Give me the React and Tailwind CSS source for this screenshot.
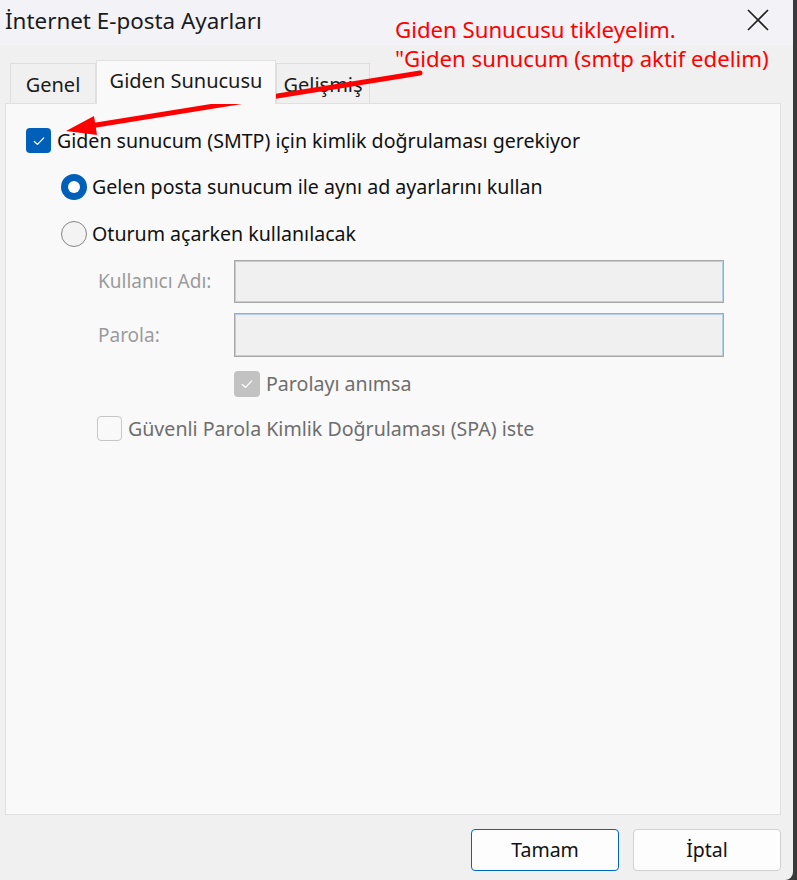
import React from "react";

const font = { fontFamily: '"Noto Sans", "Open Sans", sans-serif' };

function CheckMark({ color = "#ffffff" }) {
  return (
    <svg width="14" height="14" viewBox="0 0 14 14" fill="none">
      <path d="M2.3 7.4 L5.6 10.4 L11.7 3.9" stroke={color} strokeWidth="1.3" strokeLinecap="round" strokeLinejoin="round" />
    </svg>
  );
}

function Tab({ label, active }) {
  if (active) {
    return (
      <div className="relative z-10 -mb-px flex h-[44px] w-[180px] items-center justify-center border border-b-0 border-[#e0e0e0] bg-[#f9f9f9] pb-[4px] text-[20px] text-[#1a1a1a]">
        {label}
      </div>
    );
  }
  return (
    <div className="mt-[3px] flex h-[40px] items-center justify-center border border-b-0 border-[#dedede] bg-[#f0f0f0] pt-[2px] text-[20px] text-[#1a1a1a]">
      {label}
    </div>
  );
}

function Field({ label }) {
  return (
    <div className="flex h-full items-center">
      <div className="w-[228px] shrink-0 pl-[92px] text-[19px] text-[#9b9b9b] whitespace-nowrap">{label}</div>
      <div className="h-full w-[490px] shrink-0 border border-[#a8a8a8] bg-[#f0f0f0] shadow-[inset_0_0_0_1px_#b6d0ea]" />
    </div>
  );
}

export default function App() {
  return (
    <div className="flex h-[880px] w-[797px] bg-[#3a3a3a]" style={font}>
      <div className="relative flex h-[880px] w-[793px] flex-col overflow-hidden rounded-br-[8px] bg-[#f0f0f0]">
        {/* title bar */}
        <div className="flex h-[45px] shrink-0 items-center justify-between bg-[#f3f2f7] pl-[5px] pr-[24px]">
          <div className="text-[22.4px] text-[#1a1a1a] pb-[3px]">İnternet E-posta Ayarları</div>
          <svg width="22" height="22" viewBox="0 0 22 22" className="mb-[6px]">
            <path d="M1 1 L21 21 M21 1 L1 21" stroke="#1f1f1f" strokeWidth="1.6" />
          </svg>
        </div>

        {/* tabs */}
        <div className="mt-[15px] flex pl-[10px]">
          <div className="w-[86px]">
            <Tab label="Genel" />
          </div>
          <Tab label="Giden Sunucusu" active />
          <div className="w-[94px]">
            <Tab label="Gelişmiş" />
          </div>
        </div>

        {/* tab panel */}
        <div className="ml-[5px] flex h-[712px] w-[776px] flex-col border border-[#e0e0e0] bg-[#f9f9f9] text-[19.6px] text-[#111111]">
          <div className="mt-[24px] flex h-[25px] items-center pl-[20px]">
            <div className="flex h-[25px] w-[25px] items-center justify-center rounded-[4px] bg-[#005fb8]">
              <CheckMark />
            </div>
            <span className="ml-[6px] whitespace-nowrap">Giden sunucum (SMTP) için kimlik doğrulaması gerekiyor</span>
          </div>

          <div className="mt-[21px] flex h-[26px] items-center pl-[55px]">
            <div className="flex h-[26px] w-[26px] items-center justify-center rounded-full bg-[#005fb8]">
              <div className="h-[12px] w-[12px] rounded-full bg-white" />
            </div>
            <span className="ml-[5px] whitespace-nowrap">Gelen posta sunucum ile aynı ad ayarlarını kullan</span>
          </div>

          <div className="mt-[21px] flex h-[26px] items-center pl-[55px]">
            <div className="h-[26px] w-[26px] rounded-full border border-[#858585] bg-[#f3f3f3]" />
            <span className="ml-[5px] whitespace-nowrap">Oturum açarken kullanılacak</span>
          </div>

          <div className="mt-[13px] h-[43px]">
            <Field label="Kullanıcı Adı:" />
          </div>
          <div className="mt-[10px] h-[44px]">
            <Field label="Parola:" />
          </div>

          <div className="mt-[14px] flex h-[26px] items-center pl-[228px]">
            <div className="flex h-[26px] w-[26px] items-center justify-center rounded-[4px] bg-[#c2c2c2]">
              <CheckMark />
            </div>
            <span className="ml-[6px] whitespace-nowrap text-[#6e6e6e]">Parolayı anımsa</span>
          </div>

          <div className="mt-[19px] flex h-[25px] items-center pl-[91px]">
            <div className="h-[25px] w-[25px] rounded-[4px] border border-[#c6c6c6] bg-[#f9f9f9]" />
            <span className="ml-[6px] whitespace-nowrap text-[#6e6e6e]">Güvenli Parola Kimlik Doğrulaması (SPA) iste</span>
          </div>
        </div>

        {/* dialog buttons */}
        <div className="mt-[14px] flex justify-end gap-[14px] pr-[12px]">
          <button className="h-[42px] w-[148px] rounded-[4px] border border-[#0067c0] bg-[#fdfdfd] text-[19.5px] text-[#111111]">Tamam</button>
          <button className="h-[42px] w-[148px] rounded-[4px] border border-[#d0d0d0] bg-[#fdfdfd] text-[19.5px] text-[#111111]">İptal</button>
        </div>

        {/* red annotation */}
        <div className="absolute left-[395px] top-[15px] text-[22.2px] leading-[29px] text-[#ff0000] whitespace-nowrap">
          <div>Giden Sunucusu tikleyelim.</div>
          <div>"Giden sunucum (smtp aktif edelim)</div>
        </div>
        <svg className="pointer-events-none absolute left-0 top-0" width="793" height="200" viewBox="0 0 793 200">
          <path d="M420 73 L90 126" stroke="#ff0000" strokeWidth="5" strokeLinecap="round" />
          <path d="M66 131 L94 116 L97 135 Z" fill="#ff0000" />
        </svg>
      </div>
    </div>
  );
}
